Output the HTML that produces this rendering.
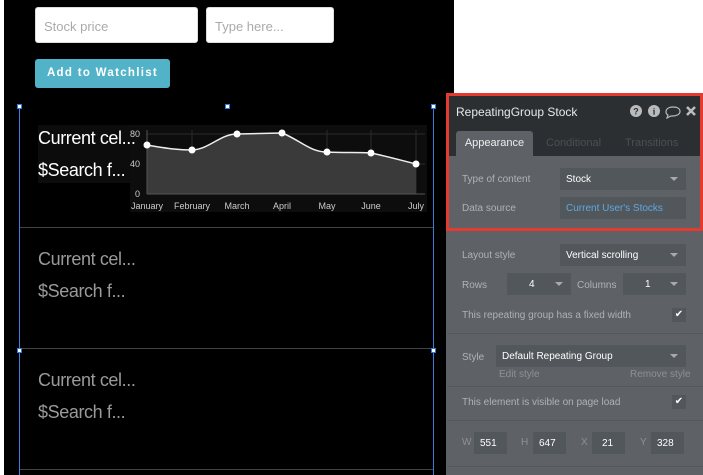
<!DOCTYPE html>
<html><head><meta charset="utf-8"><style>
*{margin:0;padding:0;box-sizing:border-box}
body{width:703px;height:475px;background:#fff;position:relative;overflow:hidden;font-family:"Liberation Sans",sans-serif}
.a{position:absolute}
.inp{background:#fff;border:1px solid #ddd;border-radius:3px;color:#aaa;font-size:13px;padding:11px 0 0 8px}
.h{width:5px;height:5px;border:1px solid #2c7be5;background:#fff;position:absolute}
.ct{color:#fff;font-size:18px;letter-spacing:-0.4px;z-index:2}
.cg{color:#9a9a9a;font-size:18px;letter-spacing:-0.4px}
.lab{color:#aeb2b5;font-size:10px;position:absolute}
.dd{background:#52575b;color:#fff;font-size:10px;position:absolute;padding-left:6px;display:flex;align-items:center}
.arr{position:absolute;right:8px;top:50%;margin-top:-2px;border:4px solid transparent;border-top:4px solid #aaa;border-bottom:0}
.sep{position:absolute;left:447px;width:256px;height:1px;background:#54585c}
.cb{position:absolute;width:14px;height:14px;background:#53575b;color:#fff;font-size:10px;text-align:center;line-height:14px}
</style></head><body>
<div class="a" style="left:4px;top:0;width:450px;height:475px;background:#000"></div>
<div class="a inp" style="left:35px;top:7px;width:163px;height:36px">Stock price</div>
<div class="a inp" style="left:206px;top:7px;width:128px;height:36px">Type here...</div>
<div class="a" style="left:35px;top:59px;width:135px;height:29px;background:#52b3c8;border-radius:3px;color:#fff;font-weight:bold;font-size:11.5px;letter-spacing:1.3px;text-align:center;line-height:29px">Add to Watchlist</div>
<div class="a" style="left:19px;top:107px;width:1px;height:368px;background:#3b7dd8"></div>
<div class="a" style="left:433px;top:107px;width:1px;height:368px;background:#3b7dd8"></div>
<div class="a" style="left:20px;top:227px;width:413px;height:1px;background:#444"></div>
<div class="a" style="left:20px;top:348px;width:413px;height:1px;background:#444"></div>
<div class="a" style="left:20px;top:469px;width:413px;height:1px;background:#444"></div>
<div class="h" style="left:17px;top:104px"></div><div class="h" style="left:225px;top:104px"></div><div class="h" style="left:431px;top:104px"></div>
<div class="h" style="left:17px;top:348px"></div><div class="h" style="left:431px;top:348px"></div>
<div class="a" style="left:38px;top:125px;width:92px;height:58px;background:#0c0c0c"></div>
<svg class="a" style="left:130px;top:125px" width="297" height="87" viewBox="130 125 297 87">
<rect x="130" y="125" width="297" height="87" fill="#0d0d0d"/>
<g stroke="#2a2a2a" stroke-width="1"><line x1="147" y1="134" x2="425" y2="134"/><line x1="147" y1="164" x2="425" y2="164"/>
<line x1="192" y1="130" x2="192" y2="194"/><line x1="237" y1="130" x2="237" y2="194"/><line x1="282" y1="130" x2="282" y2="194"/><line x1="327" y1="130" x2="327" y2="194"/><line x1="371" y1="130" x2="371" y2="194"/><line x1="416" y1="130" x2="416" y2="194"/></g>
<path d="M147 145 C170 149,180 150,192 150 C210 149,220 134,237 134 L282 133 C300 140,310 152,327 152 C345 153,355 152,371 153 C390 157,400 160,416 164 L416 194 L147 194Z" fill="#3a3a3a"/>
<path d="M147 145 C170 149,180 150,192 150 C210 149,220 134,237 134 L282 133 C300 140,310 152,327 152 C345 153,355 152,371 153 C390 157,400 160,416 164" fill="none" stroke="#eee" stroke-width="1.5"/>
<line x1="147" y1="194" x2="425" y2="194" stroke="#555"/><line x1="147" y1="130" x2="147" y2="194" stroke="#555"/>
<g fill="#fff"><circle cx="147" cy="145" r="3.5"/><circle cx="192" cy="150" r="3.5"/><circle cx="237" cy="134" r="3.5"/><circle cx="282" cy="133" r="3.5"/><circle cx="327" cy="152" r="3.5"/><circle cx="371" cy="153" r="3.5"/><circle cx="416" cy="164" r="3.5"/></g>
<g fill="#ccc" font-size="9" font-family="Liberation Sans"><text x="130" y="137">80</text><text x="130" y="167">40</text><text x="135" y="197">0</text>
<g text-anchor="middle"><text x="147" y="209">January</text><text x="192" y="209">February</text><text x="237" y="209">March</text><text x="282" y="209">April</text><text x="327" y="209">May</text><text x="371" y="209">June</text><text x="416" y="209">July</text></g></g>
</svg>
<div class="a ct" style="left:38px;top:128px">Current cel...</div>
<div class="a ct" style="left:38px;top:160px">$Search f...</div>
<div class="a cg" style="left:38px;top:249px">Current cel...</div>
<div class="a cg" style="left:38px;top:281px">$Search f...</div>
<div class="a cg" style="left:38px;top:370px">Current cel...</div>
<div class="a cg" style="left:38px;top:402px">$Search f...</div>
<div class="a" style="left:446px;top:93px;width:257px;height:382px;background:#5e6266"></div>
<div class="a" style="left:448px;top:96px;width:255px;height:60px;background:#2b2f31"></div>
<div class="a" style="left:456px;top:105px;color:#e8e8e8;font-size:12px">RepeatingGroup Stock</div>
<svg class="a" style="left:628px;top:103px" width="72" height="16" viewBox="0 0 72 16">
<circle cx="8" cy="8" r="6" fill="#bbb"/><text x="8" y="11.5" text-anchor="middle" font-size="9" font-weight="bold" fill="#2b2f31" font-family="Liberation Sans">?</text>
<circle cx="26" cy="8" r="6" fill="#bbb"/><text x="26" y="11.5" text-anchor="middle" font-size="9" font-weight="bold" fill="#2b2f31" font-family="Liberation Serif">i</text>
<path d="M38 9 C38 5,42 4,45 4 C49 4,52 5.5,52 8.5 C52 11.5,48 13,45 13 L43 13 L39 15 L40 12 C38.7 11.3,38 10.3,38 9Z" fill="none" stroke="#bbb" stroke-width="1.2"/>
<path d="M59 4 L67 12 M67 4 L59 12" stroke="#bbb" stroke-width="2.6"/>
</svg>
<div class="a" style="left:456px;top:131px;width:77px;height:25px;background:#5e6266;border-radius:3px 3px 0 0;color:#eee;font-size:11px;text-align:center;line-height:25px">Appearance</div>
<div class="a" style="left:546px;top:137px;color:#4a4f53;font-size:11px">Conditional</div>
<div class="a" style="left:625px;top:137px;color:#4a4f53;font-size:11px">Transitions</div>
<div class="a" style="left:446px;top:93px;width:257px;height:138px;border:3px solid #e53a2f"></div>
<div class="lab" style="left:462px;top:174px">Type of content</div>
<div class="dd" style="left:560px;top:168px;width:126px;height:22px">Stock<span class="arr"></span></div>
<div class="lab" style="left:462px;top:203px">Data source</div>
<div class="dd" style="left:560px;top:197px;width:126px;height:22px;color:#5fa8e0">Current User's Stocks</div>
<div class="lab" style="left:462px;top:250px">Layout style</div>
<div class="dd" style="left:560px;top:244px;width:126px;height:22px">Vertical scrolling<span class="arr"></span></div>
<div class="lab" style="left:462px;top:280px">Rows</div>
<div class="dd" style="left:507px;top:273px;width:64px;height:22px;padding-left:22px">4<span class="arr"></span></div>
<div class="lab" style="left:577px;top:280px">Columns</div>
<div class="dd" style="left:623px;top:273px;width:63px;height:22px;padding-left:22px">1<span class="arr"></span></div>
<div class="lab" style="left:462px;top:310px">This repeating group has a fixed width</div>
<div class="cb" style="left:672px;top:308px">✔</div>
<div class="sep" style="top:333px"></div>
<div class="lab" style="left:462px;top:352px">Style</div>
<div class="dd" style="left:496px;top:345px;width:190px;height:22px">Default Repeating Group<span class="arr"></span></div>
<div class="lab" style="left:499px;top:369px;color:#8d9195">Edit style</div>
<div class="lab" style="left:630px;top:369px;color:#8d9195">Remove style</div>
<div class="sep" style="top:386px"></div>
<div class="lab" style="left:462px;top:397px">This element is visible on page load</div>
<div class="cb" style="left:672px;top:395px">✔</div>
<div class="sep" style="top:420px"></div>
<div class="lab" style="left:462px;top:437px;color:#8d9195">W</div><div class="dd" style="left:474px;top:432px;width:33px;height:22px">551</div>
<div class="lab" style="left:521px;top:437px;color:#8d9195">H</div><div class="dd" style="left:533px;top:432px;width:33px;height:22px">647</div>
<div class="lab" style="left:581px;top:437px;color:#8d9195">X</div><div class="dd" style="left:592px;top:432px;width:33px;height:22px;padding-left:10px">21</div>
<div class="lab" style="left:640px;top:437px;color:#8d9195">Y</div><div class="dd" style="left:651px;top:432px;width:33px;height:22px">328</div>
<div class="sep" style="top:466px"></div>
</body></html>
